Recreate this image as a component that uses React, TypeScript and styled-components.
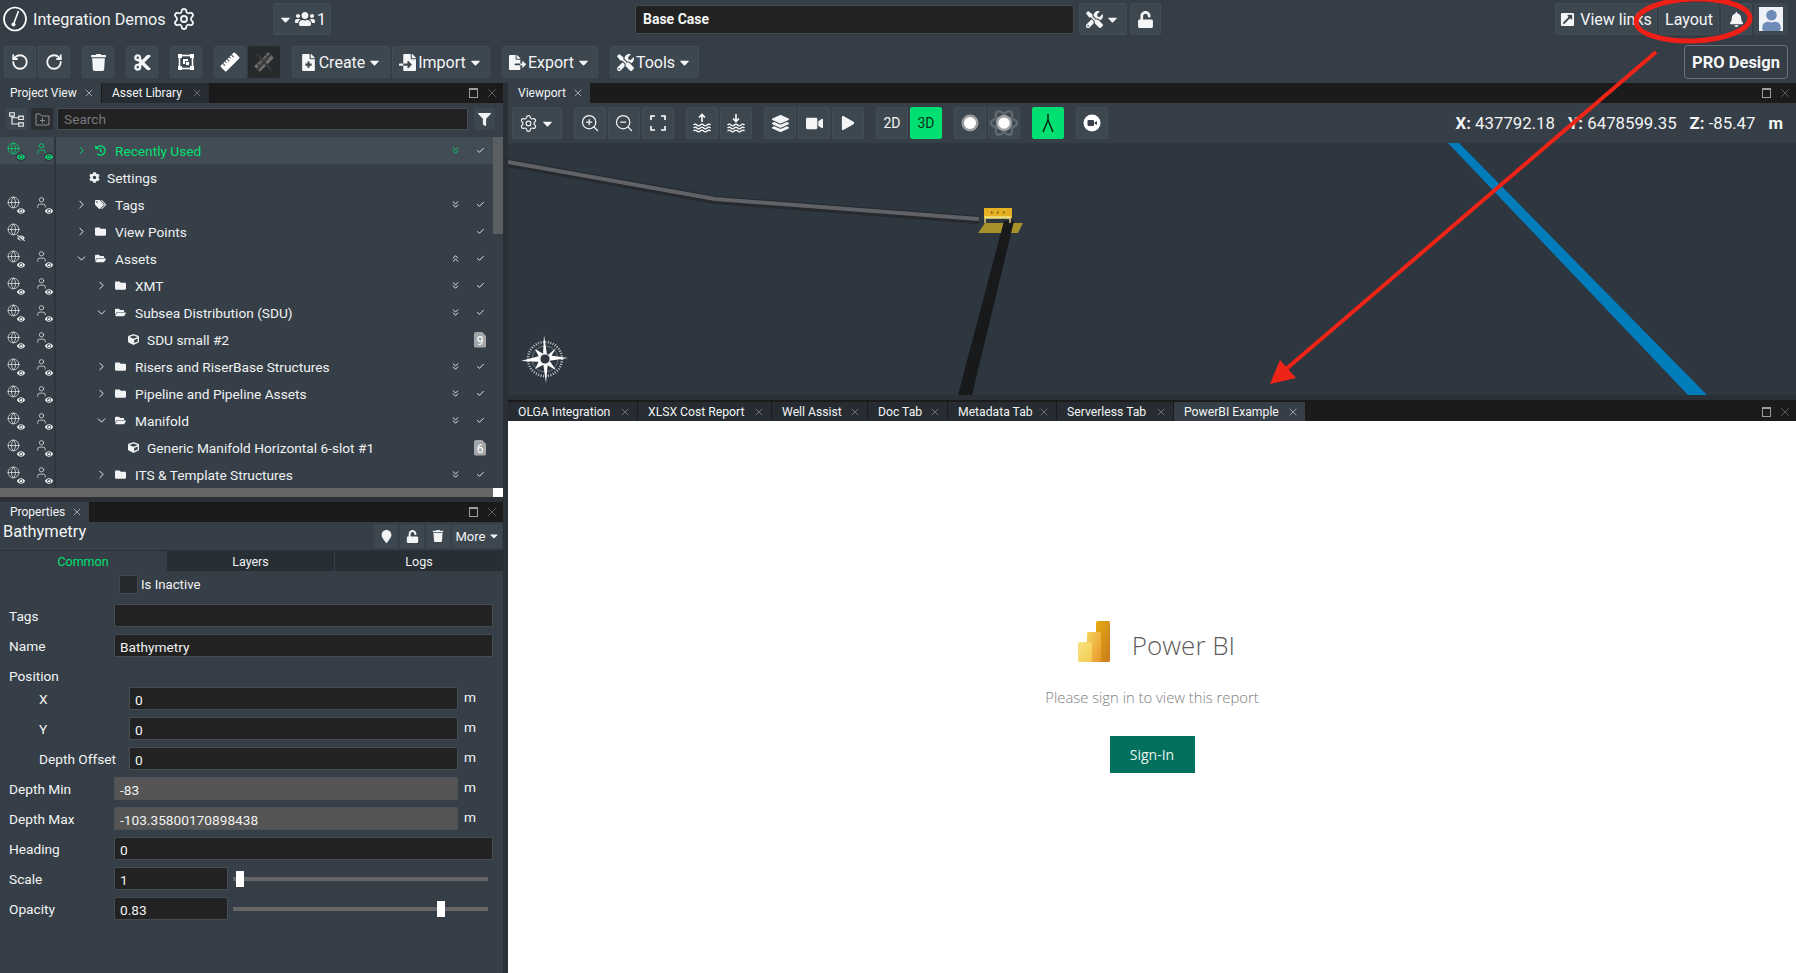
import React from "react";
import styled, { createGlobalStyle } from "styled-components";
import {
  FaBell,
  FaCaretDown,
  FaCog,
  FaCube,
  FaCut,
  FaFileExport,
  FaFileImport,
  FaFileMedical,
  FaFilter,
  FaFolder,
  FaFolderOpen,
  FaHistory,
  FaLayerGroup,
  FaMapMarker,
  FaPlay,
  FaTags,
  FaTools,
  FaTrash,
  FaUnlock,
  FaUser,
  FaUsers,
  FaVideo,
  FaEye,
  FaEyeSlash,
  FaExternalLinkSquareAlt,
} from "react-icons/fa";
import {
  Check,
  ChevronDown,
  ChevronRight,
  ChevronsDown,
  ChevronsUp,
  Globe,
  RotateCcw,
  RotateCw,
  Settings,
  User,
  X,
  ZoomIn,
  ZoomOut,
} from "lucide-react";

const GREEN = "#00e070";

const GlobalStyle = createGlobalStyle`
  html, body {
    margin: 0;
    padding: 0;
    background: #2a3036;
    overflow: hidden;
  }
  * {
    box-sizing: border-box;
  }
`;

const Page = styled.div`
  position: relative;
  width: 1796px;
  height: 973px;
  overflow: hidden;
  background: #2a3036;
  color: #f2f4f5;
  font-family: Roboto, "Liberation Sans", sans-serif;
  font-size: 13.7px;
`;

const Header = styled.header`
  height: 83px;
  background: #353e46;
  padding-top: 3px;
`;

const TopRow = styled.div`
  height: 32px;
  display: flex;
  align-items: center;
`;

const Brand = styled.div`
  width: 273px;
  flex: none;
  display: flex;
  align-items: center;
  padding-left: 3px;
  font-size: 16.2px;
  gap: 6px;
`;

const ToolRow = styled.div`
  height: 34px;
  margin-top: 10px;
  display: flex;
  align-items: center;
  padding-left: 4px;
  padding-right: 8px;
  gap: 12px;
`;

const Group = styled.div`
  display: flex;
  align-items: center;
  gap: 2px;
`;

const Btn = styled.button<{ $w?: number; $on?: boolean; $off?: boolean; $size?: number }>`
  position: relative;
  width: ${(p) => p.$w ?? 32}px;
  height: 32px;
  flex: none;
  padding: 0;
  display: flex;
  align-items: center;
  justify-content: center;
  gap: 2px;
  font-family: inherit;
  font-size: ${(p) => p.$size ?? 16}px;
  color: ${(p) => (p.$on ? "#06301c" : p.$off ? "#6d6d6d" : "#f4f5f6")};
  background: ${(p) => (p.$on ? GREEN : p.$off ? "#262a2d" : "#3d474f")};
  border: 1px solid ${(p) => (p.$on ? GREEN : p.$off ? "#262a2d" : "#434d55")};
  border-radius: 2px;
`;

const LinkBtn = styled(Btn)`
  gap: 5px;
`;

const BaseCase = styled.input`
  width: 439px;
  height: 29px;
  margin-left: 304px;
  padding: 0 7px;
  background: #222;
  border: 1px solid #454c52;
  border-radius: 2px;
  color: #f4f5f6;
  font-family: inherit;
  font-size: 14px;
  font-weight: 700;
`;

const TopTools = styled(Group)`
  margin-left: 5px;
  gap: 3px;
`;

const TopRight = styled(Group)`
  margin-left: auto;
  padding-right: 8px;
`;

const Avatar = styled.div`
  width: 34px;
  height: 32px;
  display: flex;
  align-items: center;
  justify-content: center;
  background: #3d474f;
  border-radius: 2px;
`;

const AvatarFace = styled.div`
  width: 24px;
  height: 24px;
  background: #eef1f6;
  color: #6f8cb8;
  overflow: hidden;
  display: flex;
  align-items: flex-end;
  justify-content: center;
`;

const ProBtn = styled.button`
  margin-left: auto;
  width: 104px;
  height: 34px;
  padding: 0;
  background: #353e46;
  border: 1px solid #6a737a;
  border-radius: 4px;
  color: #f4f5f6;
  font-family: inherit;
  font-size: 16.5px;
  font-weight: 700;
`;

const Workspace = styled.div`
  height: 890px;
  display: grid;
  grid-template-columns: 503px 1fr;
  column-gap: 5px;
`;

const Column = styled.div`
  display: flex;
  flex-direction: column;
  min-width: 0;
`;

const TabStrip = styled.div`
  height: 20px;
  flex: none;
  display: flex;
  align-items: stretch;
  gap: 1px;
  background: #1b1b1b;
`;

const Tab = styled.div<{ $active?: boolean; $w: number }>`
  width: ${(p) => p.$w}px;
  flex: none;
  display: flex;
  align-items: center;
  justify-content: space-between;
  padding: 0 6px 0 10px;
  font-size: 12px;
  white-space: nowrap;
  background: ${(p) => (p.$active ? "#363f47" : "#262c32")};
  color: #f2f4f5;
`;

const ReportTab = styled(Tab)`
  font-size: 12.2px;
`;

const TabClose = styled(X)<{ $dim?: boolean }>`
  color: ${(p) => (p.$dim ? "#9a9ea1" : "#e8eaec")};
  flex: none;
`;

const StripIcons = styled.div`
  margin-left: auto;
  display: flex;
  align-items: center;
  gap: 7px;
  padding-right: 4px;
  color: #8a8f93;
`;

const MaxBox = styled.span`
  width: 9px;
  height: 10px;
  border: 1px solid #9a9ea1;
  border-top-width: 2px;
`;

const ProjectPanel = styled.section`
  flex: none;
  display: flex;
  flex-direction: column;
  background: #363f47;
`;

const SearchRow = styled.div`
  height: 34px;
  flex: none;
  display: flex;
  align-items: center;
  padding: 0 6px 2px;
  gap: 4px;
`;

const SmallBtn = styled.div<{ $dark?: boolean }>`
  width: ${(p) => (p.$dark ? 22 : 21)}px;
  height: 22px;
  flex: none;
  display: flex;
  align-items: center;
  justify-content: center;
  background: ${(p) => (p.$dark ? "#2a2e31" : "#3d474f")};
  color: ${(p) => (p.$dark ? "#8b8f92" : "#f0f2f3")};
  border-radius: 2px;
`;

const FilterBtn = styled(SmallBtn)`
  margin-left: 2px;
`;

const Search = styled.input`
  width: 411px;
  height: 22px;
  padding: 0 6px;
  background: #222;
  border: 1px solid #454c52;
  color: #eee;
  font-family: inherit;
  font-size: 13.7px;
  &::placeholder {
    color: #77797b;
  }
`;

const TreeArea = styled.div`
  display: flex;
  height: 351px;
  flex: none;
`;

const Tree = styled.div`
  width: 493px;
  flex: none;
`;

const ScrollTrack = styled.div`
  width: 10px;
  flex: none;
  background: #363f47;
`;

const ScrollThumb = styled.div`
  width: 10px;
  height: 97px;
  background: #5a5f63;
`;

const HScrollRow = styled.div`
  height: 9px;
  flex: none;
  display: flex;
`;

const HScrollBar = styled.div`
  width: 493px;
  background: #666;
`;

const HScrollCorner = styled.div`
  width: 10px;
  background: #fff;
`;

const TreeRow = styled.div<{ $active?: boolean }>`
  height: 27px;
  display: flex;
  align-items: center;
  background: ${(p) => (p.$active ? "#414c54" : "transparent")};
  color: ${(p) => (p.$active ? GREEN : "#f0f2f3")};
`;

const VisCol = styled.div`
  width: 56px;
  height: 100%;
  flex: none;
  display: flex;
  align-items: center;
  padding-left: 7px;
  gap: 11px;
  border-right: 2px solid #2e363d;
`;

const VisIcon = styled.span`
  position: relative;
  width: 17px;
  height: 17px;
  flex: none;
  display: block;
`;

const VisBadge = styled.span`
  position: absolute;
  right: -2px;
  bottom: -3px;
  width: 10px;
  height: 10px;
  border-radius: 50%;
  background: #363f47;
  display: flex;
  align-items: center;
  justify-content: center;
`;

const TreeBody = styled.div<{ $indent: number }>`
  flex: 1;
  min-width: 0;
  display: flex;
  align-items: center;
  padding-left: ${(p) => p.$indent}px;
  white-space: nowrap;
`;

const Caret = styled.span`
  width: 20px;
  flex: none;
  display: flex;
`;

const NodeIcon = styled.span<{ $w?: number }>`
  width: ${(p) => p.$w ?? 20}px;
  flex: none;
  display: flex;
  align-items: center;
`;

const RowEnd = styled.div`
  flex: none;
  display: flex;
  align-items: center;
  gap: 5px;
  padding-right: 3px;
`;

const EndSlot = styled.span`
  width: 20px;
  display: flex;
  justify-content: center;
  align-items: center;
`;

const CountBadge = styled.span`
  width: 12px;
  height: 16px;
  border-radius: 2px;
  background: #a3a7aa;
  color: #fff;
  font-size: 12px;
  line-height: 18px;
  text-align: center;
  clip-path: polygon(0 0, 65% 0, 100% 28%, 100% 100%, 0 100%);
`;

const PropertiesPanel = styled.section`
  margin-top: 5px;
  flex: 1;
  display: flex;
  flex-direction: column;
  background: #363f47;
`;

const PropHeader = styled.div`
  height: 29px;
  flex: none;
  display: flex;
  align-items: flex-start;
  padding: 2px 1px 0 3px;
  border-bottom: 1px solid #2a3036;
`;

const PropTitle = styled.div`
  margin-top: -2px;
  font-size: 16.4px;
  line-height: 20px;
`;

const PropButtons = styled(Group)`
  margin-left: auto;
`;

const PropBtn = styled.div<{ $w?: number }>`
  width: ${(p) => p.$w ?? 24}px;
  height: 24px;
  display: flex;
  align-items: center;
  justify-content: center;
  gap: 3px;
  font-size: 13px;
  background: #3d474f;
  border-radius: 2px;
`;

const MoreBtn = styled(PropBtn)`
  padding-left: 2px;
`;

const PropTabs = styled.div`
  height: 20px;
  flex: none;
  display: grid;
  grid-template-columns: 166px 167px 1fr;
  gap: 1px;
`;

const PropTab = styled.div<{ $active?: boolean }>`
  display: flex;
  align-items: center;
  justify-content: center;
  font-size: 12.5px;
  background: ${(p) => (p.$active ? "transparent" : "#272e34")};
  color: ${(p) => (p.$active ? GREEN : "#f0f2f3")};
`;

const Form = styled.div`
  padding-top: 4px;
  display: flex;
  flex-direction: column;
`;

const CheckRow = styled.div`
  display: flex;
  align-items: center;
  gap: 3px;
  height: 19px;
  padding-left: 119px;
  margin-bottom: 10px;
  font-size: 13.2px;
`;

const CheckBox = styled.span`
  width: 19px;
  height: 19px;
  background: #262a2d;
  border: 1px solid #424a51;
`;

const FieldRow = styled.div<{ $tight?: boolean }>`
  height: 23px;
  margin-bottom: ${(p) => (p.$tight ? 0 : 7)}px;
  display: flex;
  align-items: center;
  padding-left: 9px;
  padding-right: 10px;
`;

const FieldLabel = styled.label<{ $nested?: boolean }>`
  width: ${(p) => (p.$nested ? 120 : 105)}px;
  flex: none;
  padding-left: ${(p) => (p.$nested ? 30 : 0)}px;
  white-space: nowrap;
`;

const Field = styled.input<{ $disabled?: boolean; $w?: number }>`
  ${(p) => (p.$w ? `width: ${p.$w}px; flex: none;` : "flex: 1; min-width: 0;")}
  height: 23px;
  padding: 2px 5px 0;
  background: ${(p) => (p.$disabled ? "#555" : "#222")};
  border: 1px solid ${(p) => (p.$disabled ? "#4d5256" : "#454c52")};
  border-radius: 1px;
  color: #f0f2f3;
  font-family: inherit;
  font-size: 13.7px;
`;

const Unit = styled.span`
  width: 35px;
  flex: none;
  padding-left: 6px;
  margin-top: -3px;
`;

const SliderTrack = styled.div`
  position: relative;
  width: 255px;
  height: 4px;
  margin-left: 5px;
  background: #666;
`;

const SliderThumb = styled.span`
  position: absolute;
  top: -6px;
  width: 8px;
  height: 16px;
  background: #fff;
`;

const ViewportPanel = styled.section`
  height: 312px;
  flex: none;
  display: flex;
  flex-direction: column;
`;

const ViewBar = styled.div`
  height: 40px;
  flex: none;
  display: flex;
  align-items: center;
  padding: 0 13px 0 4px;
  gap: 12px;
  background: #363f47;
`;

const Coords = styled.div`
  margin-left: auto;
  display: flex;
  align-items: center;
  gap: 13px;
  font-size: 16.8px;
  b {
    font-weight: 700;
  }
`;

const Canvas = styled.div`
  position: relative;
  flex: 1;
  overflow: hidden;
  background: #2e3640;
`;

const SceneSvg = styled.svg`
  position: absolute;
  inset: 0;
  width: 100%;
  height: 100%;
`;

const ReportPanel = styled.section`
  margin-top: 5px;
  flex: 1;
  display: flex;
  flex-direction: column;
`;

const ReportStrip = styled(TabStrip)`
  height: 21px;
  padding-top: 2px;
`;

const ReportBody = styled.div`
  flex: 1;
  background: #fff;
  display: flex;
  flex-direction: column;
  align-items: center;
  padding-top: 200px;
  font-family: "Open Sans", "Liberation Sans", sans-serif;
`;

const BiBrand = styled.div`
  display: flex;
  align-items: center;
  gap: 22px;
  height: 42px;
  margin-left: 9px;
  color: #5d5d5d;
  font-size: 26px;
  font-weight: 300;
`;

const BiName = styled.span`
  margin-top: 6px;
`;

const BiPrompt = styled.p`
  margin: 23px 0 0;
  color: #7c7c7c;
  font-size: 14.8px;
  font-weight: 300;
  line-height: 22px;
`;

const SignIn = styled.button`
  margin-top: 28px;
  width: 85px;
  height: 37px;
  border: none;
  background: #01705c;
  color: #e8f3f0;
  font-family: inherit;
  font-size: 14px;
`;

const Annotation = styled.svg`
  position: absolute;
  inset: 0;
  width: 1796px;
  height: 973px;
  pointer-events: none;
`;

const LogoMark = () => (
  <svg width="24" height="26" viewBox="0 0 24 26" fill="none">
    <ellipse cx="12" cy="13" rx="11" ry="11.5" stroke="#fff" strokeWidth="1.7" />
    <path d="M15.500 5 L11 17" stroke="#fff" strokeWidth="1.5" />
    <circle cx="10.500" cy="18.500" r="2" fill="#fff" />
  </svg>
);

const FrameIcon = () => (
  <svg width="18" height="18" viewBox="0 0 18 18">
    <rect x="2.500" y="2.500" width="13" height="13" fill="none" stroke="#fff" strokeWidth="1.6" />
    <path d="M1 1h4v4H1zM13 1h4v4h-4zM1 13h4v4H1zM13 13h4v4h-4z" fill="#fff" />
    <rect x="6" y="6" width="5" height="5" fill="#fff" />
    <rect x="8.500" y="8.500" width="4" height="4" fill="#fff" stroke="#3d474f" strokeWidth="0.8" />
  </svg>
);

const RulerIcon = ({ off }: { off?: boolean }) => (
  <svg width="22" height="22" viewBox="0 0 22 22">
    <g transform="rotate(-45 11 11)">
      <rect x="1" y="7" width="20" height="8" rx="1" fill={off ? "#6d6d6d" : "#fff"} />
      <path d="M5 7v3M8 7v2M11 7v3M14 7v2M17 7v3" stroke={off ? "#262a2d" : "#3d474f"} strokeWidth="1" />
    </g>
    {off && <path d="M4 3 L18 19 M18 3 L4 19" stroke="#3a3a3a" strokeWidth="2.4" />}
  </svg>
);

const WaveIcon = ({ down }: { down?: boolean }) => (
  <svg width="20" height="20" viewBox="0 0 20 20" fill="none" stroke="#fff" strokeWidth="1.2">
    {down ? <path d="M10 1v7M7 5.500l3 3 3-3" strokeWidth="1.6" /> : <path d="M10 9V2M7 4.500l3-3 3 3" strokeWidth="1.6" />}
    <path d="M1.500 12c1.400-1.200 2.400-1.200 3.400 0s2.400 1.200 3.400 0 2.400-1.200 3.400 0 2.400 1.200 3.400 0 2.400-1.200 3.400 0" />
    <path d="M1.500 15c1.400-1.200 2.400-1.200 3.400 0s2.400 1.200 3.400 0 2.400-1.200 3.400 0 2.400 1.200 3.400 0 2.400-1.200 3.400 0" />
    <path d="M1.500 18c1.400-1.200 2.400-1.200 3.400 0s2.400 1.200 3.400 0 2.400-1.200 3.400 0 2.400 1.200 3.400 0 2.400-1.200 3.400 0" />
  </svg>
);

const FitIcon = () => (
  <svg width="18" height="18" viewBox="0 0 18 18" fill="none" stroke="#fff" strokeWidth="1.6">
    <path d="M2 6V2h4M12 2h4v4M16 12v4h-4M6 16H2v-4" />
  </svg>
);

const Orb = () => (
  <svg width="20" height="20" viewBox="0 0 20 20">
    <circle cx="10" cy="10" r="8.500" fill="#9a9ea1" />
    <circle cx="10" cy="10" r="6" fill="#fff" />
  </svg>
);

const AtomIcon = () => (
  <svg width="32" height="30" viewBox="0 0 32 30" fill="none">
    <g stroke="#5f686f" strokeWidth="2.6">
      <ellipse cx="16" cy="15" rx="14" ry="6" />
      <ellipse cx="16" cy="15" rx="14" ry="6" transform="rotate(60 16 15)" />
      <ellipse cx="16" cy="15" rx="14" ry="6" transform="rotate(120 16 15)" />
    </g>
    <circle cx="16" cy="15" r="8.500" fill="#a0a4a7" />
    <circle cx="16" cy="15" r="6" fill="#fff" />
  </svg>
);

const LambdaIcon = () => (
  <svg width="14" height="20" viewBox="0 0 14 20" fill="none" stroke="#04240f" strokeWidth="1.5">
    <path d="M7 1v6M7 7 2 19M7 7l5 12" />
  </svg>
);

const RecIcon = () => (
  <svg width="20" height="20" viewBox="0 0 20 20">
    <circle cx="10" cy="10" r="8.500" fill="#fff" />
    <rect x="5.500" y="7" width="6.500" height="6" rx="1" fill="#39424a" />
    <path d="M12.500 9.500 15 8v4l-2.500-1.500z" fill="#39424a" />
  </svg>
);

const PowerBiLogo = () => (
  <svg width="32" height="42" viewBox="0 0 32 42">
    <defs>
      <linearGradient id="biA" x1="0" y1="0" x2="1" y2="1">
        <stop offset="0" stopColor="#e6ad10" />
        <stop offset="1" stopColor="#c87a1e" />
      </linearGradient>
      <linearGradient id="biB" x1="0" y1="0" x2="1" y2="1">
        <stop offset="0" stopColor="#f6d45a" />
        <stop offset="1" stopColor="#e6962b" />
      </linearGradient>
      <linearGradient id="biC" x1="0" y1="0" x2="1" y2="1">
        <stop offset="0" stopColor="#f9e583" />
        <stop offset="1" stopColor="#f2c94f" />
      </linearGradient>
    </defs>
    <rect x="18" y="0" width="14" height="41" rx="1.500" fill="url(#biA)" />
    <rect x="9" y="11" width="14" height="30" rx="1.500" fill="url(#biB)" />
    <rect x="0" y="21" width="14" height="20" rx="1.500" fill="url(#biC)" />
  </svg>
);

const Scene = () => (
  <SceneSvg viewBox="0 0 1288 252" preserveAspectRatio="none">
    <polygon points="940,0 951,0 1199,252 1180,252" fill="#017dbb" />
    <path d="M0 20 L207 57 L471 77" fill="none" stroke="#26292d" strokeWidth="8" />
    <path d="M0 19 L207 56 L471 76" fill="none" stroke="#5f6267" strokeWidth="4" />
    <polygon points="470,90 477,80 515,80 510,90" fill="#a8912a" />
    <polygon points="496,78 506,78 464,252 450,252" fill="#17191b" />
    <rect x="476" y="65" width="28" height="10" fill="#e5b021" />
    <path d="M477 80v-6h25v6M477 75h26" stroke="#f1df7c" strokeWidth="1.3" fill="none" />
    <path d="M483 69.500h1.500M489 69.500h1.500M495 69.500h1.500" stroke="#6b5a20" strokeWidth="2" />
    <g transform="translate(37 216)" fill="#fff">
      <circle r="17" fill="none" stroke="#c3c7ca" strokeWidth="2.500" strokeDasharray="1 1.500" />
      <circle r="13" fill="none" stroke="#8d9398" strokeWidth="0.7" />
      <polygon points="-2,-4 -1,-24 2,-4 23,-1 3,2 1,24 -2,3 -24,2" />
      <polygon points="2,-3 11,-11 4,1 11,11 0,5 -10,10 -5,0 -10,-10" />
      <circle r="5" fill="#2e3640" stroke="#d8dadc" strokeWidth="1" />
    </g>
  </SceneSvg>
);

interface Node {
  label: string;
  indent: number;
  kind: "open" | "closed" | "leaf" | "settings" | "recent" | "tags";
  hasUser?: boolean;
  eyeOff?: boolean;
  doubleUp?: boolean;
  noDouble?: boolean;
  count?: number;
  active?: boolean;
}

const nodes: Node[] = [
  { label: "Recently Used", indent: 19, kind: "recent", hasUser: true, active: true },
  { label: "Settings", indent: 33, kind: "settings" },
  { label: "Tags", indent: 19, kind: "tags", hasUser: true },
  { label: "View Points", indent: 19, kind: "closed", eyeOff: true, noDouble: true },
  { label: "Assets", indent: 19, kind: "open", hasUser: true, doubleUp: true },
  { label: "XMT", indent: 39, kind: "closed", hasUser: true },
  { label: "Subsea Distribution (SDU)", indent: 39, kind: "open", hasUser: true },
  { label: "SDU small #2", indent: 72, kind: "leaf", hasUser: true, count: 9 },
  { label: "Risers and RiserBase Structures", indent: 39, kind: "closed", hasUser: true },
  { label: "Pipeline and Pipeline Assets", indent: 39, kind: "closed", hasUser: true },
  { label: "Manifold", indent: 39, kind: "open", hasUser: true },
  { label: "Generic Manifold Horizontal 6-slot #1", indent: 72, kind: "leaf", hasUser: true, count: 6 },
  { label: "ITS & Template Structures", indent: 39, kind: "closed", hasUser: true },
];

const VisMark = ({ user, off }: { user?: boolean; off?: boolean }) => (
  <VisIcon>
    {user ? <User size={13} strokeWidth={1.3} /> : <Globe size={13} strokeWidth={1.3} />}
    <VisBadge>{off ? <FaEyeSlash size={8} /> : <FaEye size={8} />}</VisBadge>
  </VisIcon>
);

const TreeItem = ({ node }: { node: Node }) => {
  const { kind } = node;
  const isLeaf = kind === "leaf" || kind === "settings";
  return (
    <TreeRow $active={node.active}>
      <VisCol>
        {kind !== "settings" && <VisMark off={node.eyeOff} />}
        {node.hasUser && <VisMark user />}
      </VisCol>
      <TreeBody $indent={node.indent}>
        {!isLeaf && (
          <Caret>
            {kind === "open" ? <ChevronDown size={13} strokeWidth={1.8} /> : <ChevronRight size={13} strokeWidth={1.8} />}
          </Caret>
        )}
        {kind === "leaf" && <NodeIcon $w={19}><FaCube size={11} /></NodeIcon>}
        {kind === "settings" && <NodeIcon $w={18}><FaCog size={11} /></NodeIcon>}
        {kind === "recent" && <NodeIcon><FaHistory size={11} /></NodeIcon>}
        {kind === "tags" && <NodeIcon><FaTags size={11} /></NodeIcon>}
        {kind === "closed" && <NodeIcon><FaFolder size={11} /></NodeIcon>}
        {kind === "open" && <NodeIcon><FaFolderOpen size={11} /></NodeIcon>}
        {node.label}
      </TreeBody>
      {kind !== "settings" && (
        <RowEnd>
          <EndSlot>
            {!node.noDouble && !node.count && (node.doubleUp ? <ChevronsUp size={11} /> : <ChevronsDown size={11} />)}
          </EndSlot>
          <EndSlot>{node.count ? <CountBadge>{node.count}</CountBadge> : <Check size={9} strokeWidth={2.4} color="#f0f2f3" />}</EndSlot>
        </RowEnd>
      )}
    </TreeRow>
  );
};

const panelIcons = (
  <StripIcons>
    <MaxBox />
    <X size={14} strokeWidth={1} />
  </StripIcons>
);

const reportTabs = [
  { label: "OLGA Integration", w: 129 },
  { label: "XLSX Cost Report", w: 133 },
  { label: "Well Assist", w: 95 },
  { label: "Doc Tab", w: 79 },
  { label: "Metadata Tab", w: 108 },
  { label: "Serverless Tab", w: 116 },
  { label: "PowerBI Example", w: 131, active: true },
];

export default function App() {
  return (
    <Page>
      <GlobalStyle />
      <Header>
        <TopRow>
          <Brand>
            <LogoMark />
            Integration Demos
            <Settings size={24} strokeWidth={1.8} />
          </Brand>
          <Btn $w={58}>
            <FaCaretDown size={15} />
            <FaUsers size={20} />1
          </Btn>
          <BaseCase defaultValue="Base Case" />
          <TopTools>
            <Btn $w={48}>
              <FaTools size={17} />
              <FaCaretDown size={15} />
            </Btn>
            <Btn $w={31}>
              <FaUnlock size={17} />
            </Btn>
          </TopTools>
          <TopRight>
            <LinkBtn $w={102}>
              <FaExternalLinkSquareAlt size={15} />
              View links
            </LinkBtn>
            <Btn $w={60}>Layout</Btn>
            <Btn $w={31}>
              <FaBell size={15} />
            </Btn>
            <Avatar>
              <AvatarFace>
                <FaUser size={21} />
              </AvatarFace>
            </Avatar>
          </TopRight>
        </TopRow>
        <ToolRow>
          <Group>
            <Btn><RotateCcw size={18} strokeWidth={2.4} /></Btn>
            <Btn><RotateCw size={18} strokeWidth={2.4} /></Btn>
          </Group>
          <Btn><FaTrash size={17} /></Btn>
          <Btn><FaCut size={19} /></Btn>
          <Btn><FrameIcon /></Btn>
          <Group>
            <Btn><RulerIcon /></Btn>
            <Btn $off><RulerIcon off /></Btn>
          </Group>
          <Group>
            <Btn $w={98}>
              <FaFileMedical size={17} />
              Create
              <FaCaretDown size={15} />
            </Btn>
            <Btn $w={98}>
              <FaFileImport size={17} />
              Import
              <FaCaretDown size={15} />
            </Btn>
          </Group>
          <Btn $w={96}>
            <FaFileExport size={17} />
            Export
            <FaCaretDown size={15} />
          </Btn>
          <Btn $w={89}>
            <FaTools size={17} />
            Tools
            <FaCaretDown size={15} />
          </Btn>
          <ProBtn>PRO Design</ProBtn>
        </ToolRow>
      </Header>

      <Workspace>
        <Column>
          <TabStrip>
            <Tab $active $w={101}>
              Project View
              <TabClose size={12} strokeWidth={1.2} />
            </Tab>
            <Tab $w={107}>
              Asset Library
              <TabClose size={12} strokeWidth={1.2} $dim />
            </Tab>
            {panelIcons}
          </TabStrip>
          <ProjectPanel>
            <SearchRow>
              <SmallBtn>
                <svg width="17" height="17" viewBox="0 0 15 15" fill="none" stroke="#f0f2f3">
                  <path d="M1.500 1.500h4v3h-4zM9.500 4.500h4v3h-4zM9.500 10.500h4v3h-4zM3.500 4.500v7h6M3.500 6h6" />
                </svg>
              </SmallBtn>
              <SmallBtn $dark>
                <svg width="15" height="14" viewBox="0 0 15 14" fill="none" stroke="#8b8f92">
                  <path d="M1 2h4l1.500 2H14v9H1zM7.500 6v5M5 8.500h5" />
                </svg>
              </SmallBtn>
              <Search placeholder="Search" />
              <FilterBtn>
                <FaFilter size={13} />
              </FilterBtn>
            </SearchRow>
            <TreeArea>
              <Tree>
                {nodes.map((node) => (
                  <TreeItem key={node.label} node={node} />
                ))}
              </Tree>
              <ScrollTrack>
                <ScrollThumb />
              </ScrollTrack>
            </TreeArea>
            <HScrollRow>
              <HScrollBar />
              <HScrollCorner />
            </HScrollRow>
          </ProjectPanel>

          <PropertiesPanel>
            <TabStrip>
              <Tab $active $w={89}>
                Properties
                <TabClose size={12} strokeWidth={1.2} />
              </Tab>
              {panelIcons}
            </TabStrip>
            <PropHeader>
              <PropTitle>Bathymetry</PropTitle>
              <PropButtons>
                <PropBtn><FaMapMarker size={13} /></PropBtn>
                <PropBtn><FaUnlock size={13} /></PropBtn>
                <PropBtn><FaTrash size={12} /></PropBtn>
                <MoreBtn $w={50}>
                  More
                  <FaCaretDown size={12} />
                </MoreBtn>
              </PropButtons>
            </PropHeader>
            <PropTabs>
              <PropTab $active>Common</PropTab>
              <PropTab>Layers</PropTab>
              <PropTab>Logs</PropTab>
            </PropTabs>
            <Form>
              <CheckRow>
                <CheckBox />
                Is Inactive
              </CheckRow>
              <FieldRow>
                <FieldLabel>Tags</FieldLabel>
                <Field defaultValue="" />
              </FieldRow>
              <FieldRow>
                <FieldLabel>Name</FieldLabel>
                <Field defaultValue="Bathymetry" />
              </FieldRow>
              <FieldRow $tight>
                <FieldLabel>Position</FieldLabel>
              </FieldRow>
              <FieldRow>
                <FieldLabel $nested>X</FieldLabel>
                <Field defaultValue="0" />
                <Unit>m</Unit>
              </FieldRow>
              <FieldRow>
                <FieldLabel $nested>Y</FieldLabel>
                <Field defaultValue="0" />
                <Unit>m</Unit>
              </FieldRow>
              <FieldRow>
                <FieldLabel $nested>Depth Offset</FieldLabel>
                <Field defaultValue="0" />
                <Unit>m</Unit>
              </FieldRow>
              <FieldRow>
                <FieldLabel>Depth Min</FieldLabel>
                <Field $disabled defaultValue="-83" />
                <Unit>m</Unit>
              </FieldRow>
              <FieldRow>
                <FieldLabel>Depth Max</FieldLabel>
                <Field $disabled defaultValue="-103.35800170898438" />
                <Unit>m</Unit>
              </FieldRow>
              <FieldRow>
                <FieldLabel>Heading</FieldLabel>
                <Field defaultValue="0" />
              </FieldRow>
              <FieldRow>
                <FieldLabel>Scale</FieldLabel>
                <Field $w={114} defaultValue="1" />
                <SliderTrack>
                  <SliderThumb style={{ left: 3 }} />
                </SliderTrack>
              </FieldRow>
              <FieldRow>
                <FieldLabel>Opacity</FieldLabel>
                <Field $w={114} defaultValue="0.83" />
                <SliderTrack>
                  <SliderThumb style={{ left: 204 }} />
                </SliderTrack>
              </FieldRow>
            </Form>
          </PropertiesPanel>
        </Column>

        <Column>
          <ViewportPanel>
            <TabStrip>
              <Tab $active $w={82}>
                Viewport
                <TabClose size={12} strokeWidth={1.2} />
              </Tab>
              {panelIcons}
            </TabStrip>
            <ViewBar>
              <Btn $w={50}>
                <Settings size={19} strokeWidth={1.5} />
                <FaCaretDown size={15} />
              </Btn>
              <Group>
                <Btn><ZoomIn size={20} strokeWidth={1.5} /></Btn>
                <Btn><ZoomOut size={20} strokeWidth={1.5} /></Btn>
                <Btn><FitIcon /></Btn>
              </Group>
              <Group>
                <Btn><WaveIcon /></Btn>
                <Btn><WaveIcon down /></Btn>
              </Group>
              <Group>
                <Btn><FaLayerGroup size={17} /></Btn>
                <Btn><FaVideo size={17} /></Btn>
                <Btn><FaPlay size={14} /></Btn>
              </Group>
              <Group>
                <Btn $size={14}>2D</Btn>
                <Btn $on $size={14}>3D</Btn>
              </Group>
              <Group>
                <Btn><Orb /></Btn>
                <Btn><AtomIcon /></Btn>
              </Group>
              <Btn $on><LambdaIcon /></Btn>
              <Btn><RecIcon /></Btn>
              <Coords>
                <span><b>X:</b> 437792.18</span>
                <span><b>Y:</b> 6478599.35</span>
                <span><b>Z:</b> -85.47</span>
                <b>m</b>
              </Coords>
            </ViewBar>
            <Canvas>
              <Scene />
            </Canvas>
          </ViewportPanel>

          <ReportPanel>
            <ReportStrip>
              {reportTabs.map((tab) => (
                <ReportTab key={tab.label} $active={tab.active} $w={tab.w}>
                  {tab.label}
                  <TabClose size={12} strokeWidth={1.2} $dim={!tab.active} />
                </ReportTab>
              ))}
              {panelIcons}
            </ReportStrip>
            <ReportBody>
              <BiBrand>
                <PowerBiLogo />
                <BiName>Power BI</BiName>
              </BiBrand>
              <BiPrompt>Please sign in to view this report</BiPrompt>
              <SignIn>Sign-In</SignIn>
            </ReportBody>
          </ReportPanel>
        </Column>
      </Workspace>

      <Annotation viewBox="0 0 1796 973">
        <ellipse cx="1693" cy="20" rx="57" ry="21" fill="none" stroke="#ee1f17" strokeWidth="5" transform="rotate(-2 1693 20)" />
        <line x1="1656" y1="52" x2="1285" y2="370" stroke="#ee2417" strokeWidth="4" />
        <polygon points="1270,384 1280,360 1296,378" fill="#ee2417" />
      </Annotation>
    </Page>
  );
}
